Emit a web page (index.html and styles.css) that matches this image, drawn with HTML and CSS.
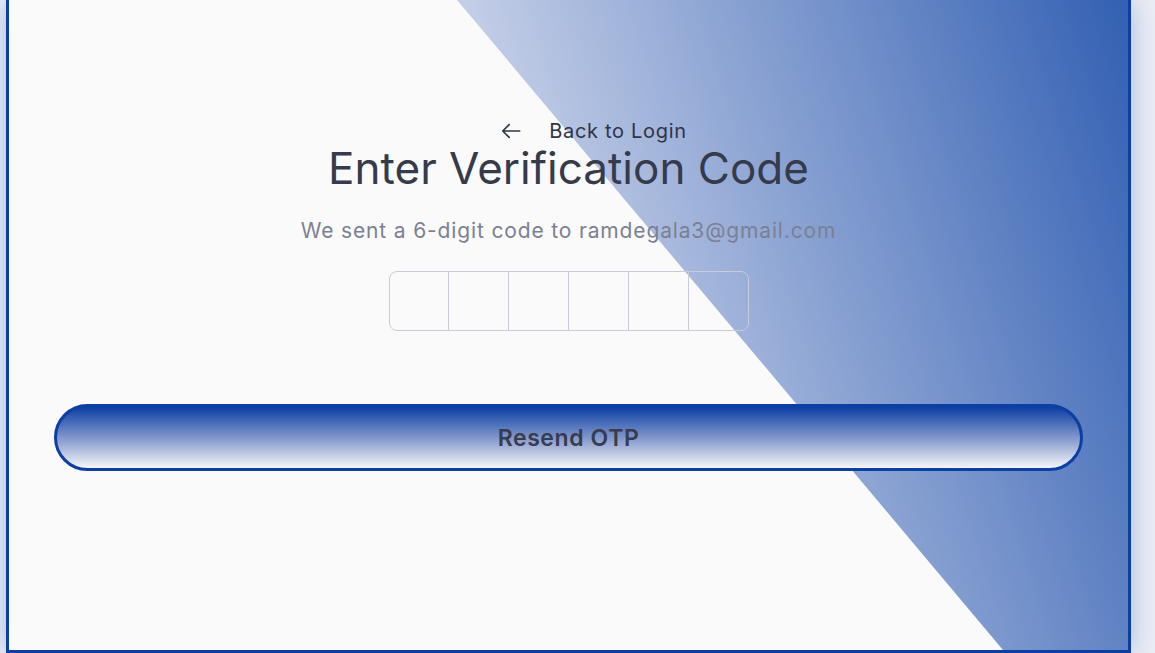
FILE: index.html
```html
<!DOCTYPE html>
<html lang="en">
<head>
<meta charset="utf-8">
<title>Enter Verification Code</title>
<link rel="stylesheet" href="styles.css">
</head>
<body>
<div class="page">
  <main class="card">
    <div class="content">
      <a class="back" href="#">
        <svg class="back-icon" viewBox="0 0 24 24" aria-hidden="true">
          <path d="M21.5 12H3M10 5l-7 7 7 7" fill="none" stroke="currentColor" stroke-width="1.8" stroke-linecap="round" stroke-linejoin="round"/>
        </svg>
        <span>Back to Login</span>
      </a>
      <h1 class="title">Enter Verification Code</h1>
      <p class="subtitle">We sent a 6-digit code to ramdegala3@gmail.com</p>
      <div class="otp">
        <input class="otp-cell" type="text" maxlength="1" aria-label="Digit 1">
        <input class="otp-cell" type="text" maxlength="1" aria-label="Digit 2">
        <input class="otp-cell" type="text" maxlength="1" aria-label="Digit 3">
        <input class="otp-cell" type="text" maxlength="1" aria-label="Digit 4">
        <input class="otp-cell" type="text" maxlength="1" aria-label="Digit 5">
        <input class="otp-cell" type="text" maxlength="1" aria-label="Digit 6">
      </div>
      <button class="resend" type="button">Resend OTP</button>
    </div>
  </main>
</div>
</body>
</html>
```

FILE: styles.css
```css
* { box-sizing: border-box; }

html, body {
  margin: 0;
  height: 100%;
  overflow: hidden;
}

body {
  background: #eceef5;
  font-family: "Inter", "Noto Sans", sans-serif;
}

.page {
  padding-left: 6px;
  width: 1131px;
}

.card {
  position: relative;
  height: 653px;
  background: #fafafa;
  border: 3px solid #0b3fa3;
  border-top: 0;
  box-shadow: 0 0 26px rgba(20, 70, 170, 0.32);
  overflow: hidden;
}

.card::before {
  content: "";
  position: absolute;
  inset: 0;
  background: linear-gradient(72deg, #c6d0e8 49%, #3360b3 100%);
  clip-path: polygon(448px 0, 100% 0, 100% 100%, 994px 100%);
}

.content {
  position: relative;
  z-index: 1;
  display: flex;
  flex-direction: column;
  align-items: center;
  padding: 120px 45px 0;
}

.back {
  display: flex;
  align-items: center;
  gap: 27px;
  height: 22px;
  margin-left: 50px;
  color: #2f3446;
  text-decoration: none;
  font-size: 20px;
  line-height: 22px;
  letter-spacing: 0.7px;
}

.back-icon {
  display: block;
  width: 22px;
  height: 22px;
}

.title {
  margin: 2px 0 0;
  font-size: 44px;
  line-height: 48px;
  font-weight: 400;
  color: #363b4b;
}

.subtitle {
  margin: 25px 0 0;
  font-size: 21px;
  line-height: 28px;
  letter-spacing: 0.85px;
  color: #7b8094;
}

.otp {
  display: flex;
  margin-top: 26px;
  width: 360px;
  height: 60px;
  border: 1px solid #c8ccd9;
  border-radius: 8px;
  overflow: hidden;
}

.otp-cell {
  flex: 1;
  min-width: 0;
  height: 100%;
  border: 0;
  border-left: 1px solid #c8ccd9;
  background: transparent;
  text-align: center;
  font-size: 24px;
  outline: none;
}

.otp-cell:first-child { border-left: 0; }

.resend {
  margin-top: 73px;
  align-self: stretch;
  height: 67px;
  border: 3px solid #0b3fa3;
  border-radius: 34px;
  background: linear-gradient(180deg, #0b3fa3 0%, #8c9fd0 55%, #f6f6fa 100%);
  color: #373c4e;
  font-family: inherit;
  font-size: 23px;
  font-weight: 600;
  letter-spacing: 0.6px;
  cursor: pointer;
}
```
